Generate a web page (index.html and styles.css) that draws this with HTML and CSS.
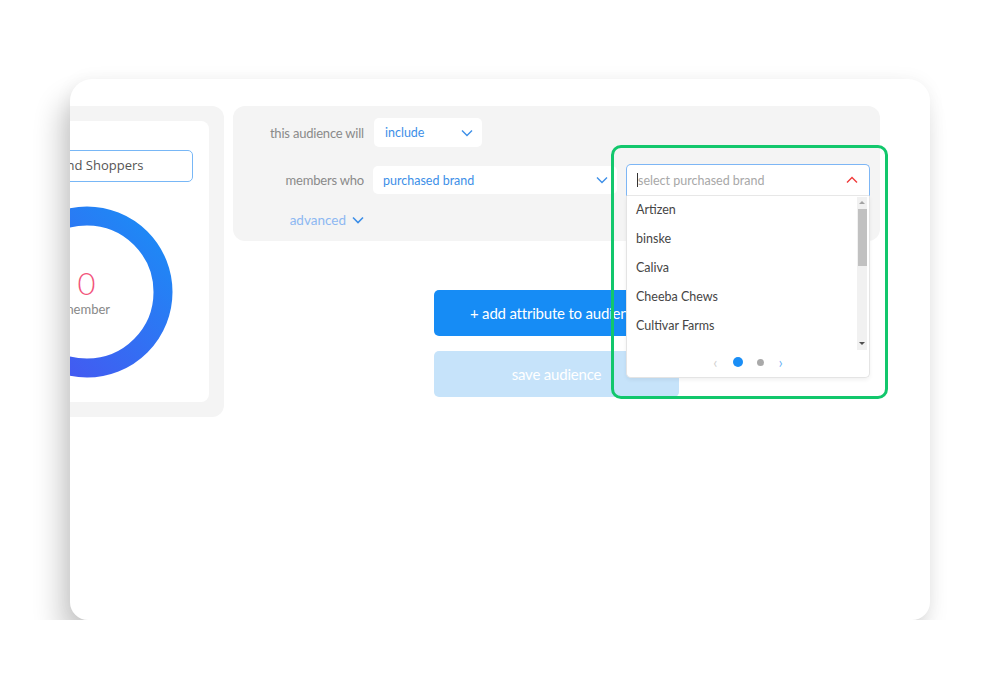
FILE: index.html
```html
<!DOCTYPE html>
<html lang="en">
<head>
  <meta charset="UTF-8" />
  <meta name="viewport" content="width=device-width, initial-scale=1.0"/>
  <title>Audience Builder</title>
  <link rel="stylesheet" href="styles.css">
</head>
<body>
  <div class="frame">
    <div class="workspace">
      <div class="summary-panel">
        <div class="summary-card">
          <input class="audience-name" type="text" value="Brand Shoppers" />
          <div class="donut">
            <svg width="172" height="172" viewBox="0 0 172 172">
              <defs>
                <linearGradient id="ring" x1="1" y1="0" x2="0" y2="1">
                  <stop offset="0" stop-color="#1a8ef6"/>
                  <stop offset="1" stop-color="#4b50f0"/>
                </linearGradient>
              </defs>
              <circle cx="86" cy="86" r="76" fill="none" stroke="url(#ring)" stroke-width="19"/>
            </svg>
            <div class="donut-label">
              <div class="count">0</div>
              <div class="unit">member</div>
            </div>
          </div>
        </div>
      </div>

      <div class="builder">
        <div class="rules-panel">
          <div class="rule-row">
            <label class="rule-label">this audience will</label>
            <div class="select select-small">
              <span>include</span>
              <svg class="chev" width="12" height="8" viewBox="0 0 12 8"><path d="M1 1.5l5 5 5-5" fill="none" stroke="#3d8fe8" stroke-width="1.4"/></svg>
            </div>
          </div>
          <div class="rule-row rule-row-brand">
            <label class="rule-label">members who</label>
            <div class="select">
              <span>purchased brand</span>
              <svg class="chev" width="12" height="8" viewBox="0 0 12 8"><path d="M1 1.5l5 5 5-5" fill="none" stroke="#3d8fe8" stroke-width="1.4"/></svg>
            </div>
            <div class="brand-picker">
              <div class="brand-input">
                <span class="caret"></span>
                <span class="placeholder">select purchased brand</span>
                <svg class="chev" width="12" height="8" viewBox="0 0 12 8"><path d="M1 6.5l5-5 5 5" fill="none" stroke="#f03a3a" stroke-width="1.4"/></svg>
              </div>
              <div class="brand-list">
                <ul class="brand-options">
                  <li>Artizen</li>
                  <li>binske</li>
                  <li>Caliva</li>
                  <li>Cheeba Chews</li>
                  <li>Cultivar Farms</li>
                </ul>
                <div class="scrollbar">
                  <span class="arrow-up"></span>
                  <span class="thumb"></span>
                  <span class="arrow-down"></span>
                </div>
                <div class="pager">
                  <span class="prev">&lsaquo;</span>
                  <span class="dot active"></span>
                  <span class="dot"></span>
                  <span class="next">&rsaquo;</span>
                </div>
              </div>
            </div>
          </div>
          <div class="rule-row">
            <a class="advanced" href="#">advanced
              <svg width="12" height="8" viewBox="0 0 12 8"><path d="M1 1.5l5 5 5-5" fill="none" stroke="#3d8fe8" stroke-width="1.6"/></svg>
            </a>
          </div>
        </div>

        <div class="actions">
          <button class="btn btn-primary">+ add attribute to audience</button>
          <button class="btn btn-disabled">save audience</button>
        </div>
      </div>
    </div>

    <div class="highlight"></div>
  </div>
</body>
</html>
```

FILE: styles.css
```css
body {
  margin: 0;
  background-color: #fff;
  font-family: Lato, "Open Sans", sans-serif;
  color: #555;
}
.frame {
  position: relative;
  width: 860px;
  height: 541px;
  margin: 79px 0 0 70px;
  background-color: #fff;
  border-radius: 22px 22px 18px 18px;
  overflow: hidden;
  box-shadow: -10px 20px 28px rgba(0,0,0,0.2), 0 0 18px rgba(0,0,0,0.05);
}
.workspace {
  display: flex;
  gap: 9px;
  padding-top: 27px;
  margin-left: -121px;
}
.summary-panel {
  width: 245px;
  height: 281px;
  padding: 15px;
  background-color: #f4f4f4;
  border-radius: 12px;
  flex-shrink: 0;
}
.summary-card {
  height: 100%;
  background-color: #fff;
  border-radius: 8px;
  padding: 29px 16px 0;
  box-sizing: border-box;
  display: flex;
  flex-direction: column;
  align-items: center;
}
.audience-name {
  width: 100%;
  height: 32px;
  box-sizing: border-box;
  border: 1px solid #78b7f6;
  border-radius: 5px;
  padding: 0 10px 2px 26px;
  font-family: "Open Sans", sans-serif;
  font-size: 13px;
  color: #555;
  text-align: center;
  outline: none;
}
.donut {
  position: relative;
  margin-top: 24px;
  width: 172px;
  height: 172px;
}
.donut-label {
  position: absolute;
  inset: 0;
  display: flex;
  flex-direction: column;
  align-items: center;
  justify-content: center;
}
.count {
  font-size: 31px;
  font-weight: 300;
  color: #f2557c;
  line-height: 32px;
}
.unit {
  font-size: 13px;
  color: #888;
  margin-top: 2px;
}
.builder {
  width: 647px;
  flex-shrink: 0;
}
.rules-panel {
  background-color: #f4f4f4;
  border-radius: 12px;
  padding: 12px 6px 11px 15px;
  height: 135px;
  box-sizing: border-box;
}
.rule-row {
  display: flex;
  align-items: center;
  gap: 10px;
  margin-bottom: 17px;
}
.rule-row-brand {
  gap: 9px;
  margin-bottom: 16px;
}
.rule-row:last-child {
  margin-bottom: 0;
}
.rule-label {
  width: 116px;
  flex-shrink: 0;
  text-align: right;
  font-size: 13px;
  color: #8a8a8a;
  letter-spacing: -0.2px;
}
.select {
  width: 244px;
  height: 28px;
  flex-shrink: 0;
  box-sizing: border-box;
  background-color: #fff;
  border-radius: 5px;
  display: flex;
  align-items: center;
  justify-content: space-between;
  padding: 0 9px 0 10px;
  font-size: 12.5px;
  color: #3d8fe8;
}
.select-small {
  width: 108px;
  height: 29px;
  padding-left: 11px;
}
.brand-picker {
  position: relative;
  width: 244px;
  flex-shrink: 0;
}
.brand-input {
  height: 32px;
  box-sizing: border-box;
  background-color: #fff;
  border: 1px solid #7db6f5;
  border-bottom-color: #e8e8e8;
  border-radius: 5px 5px 0 0;
  display: flex;
  align-items: center;
  padding: 0 11px 0 10px;
  font-size: 12.5px;
}
.caret {
  width: 1px;
  height: 14px;
  background-color: #333;
}
.placeholder {
  flex: 1;
  color: #a8a8a8;
}
.brand-list {
  position: absolute;
  top: 32px;
  left: 0;
  width: 100%;
  height: 182px;
  box-sizing: border-box;
  background-color: #fff;
  border: 1px solid #e4e4e4;
  border-top: none;
  border-radius: 0 0 5px 5px;
  box-shadow: 0 2px 4px rgba(0,0,0,0.06);
}
.brand-options {
  list-style: none;
  margin: 0;
  padding: 0;
}
.brand-options li {
  height: 29px;
  line-height: 28px;
  padding-left: 9px;
  font-size: 12.5px;
  color: #454545;
}
.scrollbar {
  position: absolute;
  top: 1px;
  right: 2px;
  width: 10px;
  height: 153px;
  background-color: #f1f1f1;
}
.scrollbar .thumb {
  position: absolute;
  top: 12px;
  left: 1px;
  width: 9px;
  height: 57px;
  background-color: #c1c1c1;
}
.arrow-up, .arrow-down {
  position: absolute;
  left: 2px;
  width: 0;
  height: 0;
  border-left: 3px solid transparent;
  border-right: 3px solid transparent;
}
.arrow-up {
  top: 4px;
  border-bottom: 3px solid #a3a3a3;
}
.arrow-down {
  bottom: 5px;
  border-top: 3px solid #505050;
}
.pager {
  position: absolute;
  left: 0;
  right: 0;
  bottom: 8px;
  display: flex;
  justify-content: center;
  align-items: center;
  gap: 14px;
  font-size: 15px;
  line-height: 14px;
}
.pager .prev {
  color: #d0d0d0;
  margin-right: 2px;
}
.pager .next {
  color: #6cb2f6;
}
.dot {
  width: 7px;
  height: 7px;
  border-radius: 50%;
  background-color: #a9a9a9;
}
.dot.active {
  width: 10px;
  height: 10px;
  background-color: #1a8ef6;
}
.advanced {
  width: 116px;
  display: flex;
  justify-content: flex-end;
  align-items: center;
  gap: 6px;
  font-size: 13.5px;
  color: #8db8f2;
  text-decoration: none;
}
.actions {
  display: flex;
  flex-direction: column;
  align-items: center;
  gap: 15px;
  margin-top: 49px;
}
.btn {
  width: 245px;
  height: 46px;
  border: none;
  border-radius: 5px;
  font-family: Lato, "Open Sans", sans-serif;
  font-size: 15px;
  color: #fff;
  letter-spacing: -0.2px;
}
.btn-primary {
  background-color: #168cf5;
}
.btn-disabled {
  background-color: #c6e3fa;
}
.highlight {
  position: absolute;
  left: 541px;
  top: 66px;
  width: 271px;
  height: 248px;
  border: 3px solid #12c76c;
  border-radius: 10px;
}
```
